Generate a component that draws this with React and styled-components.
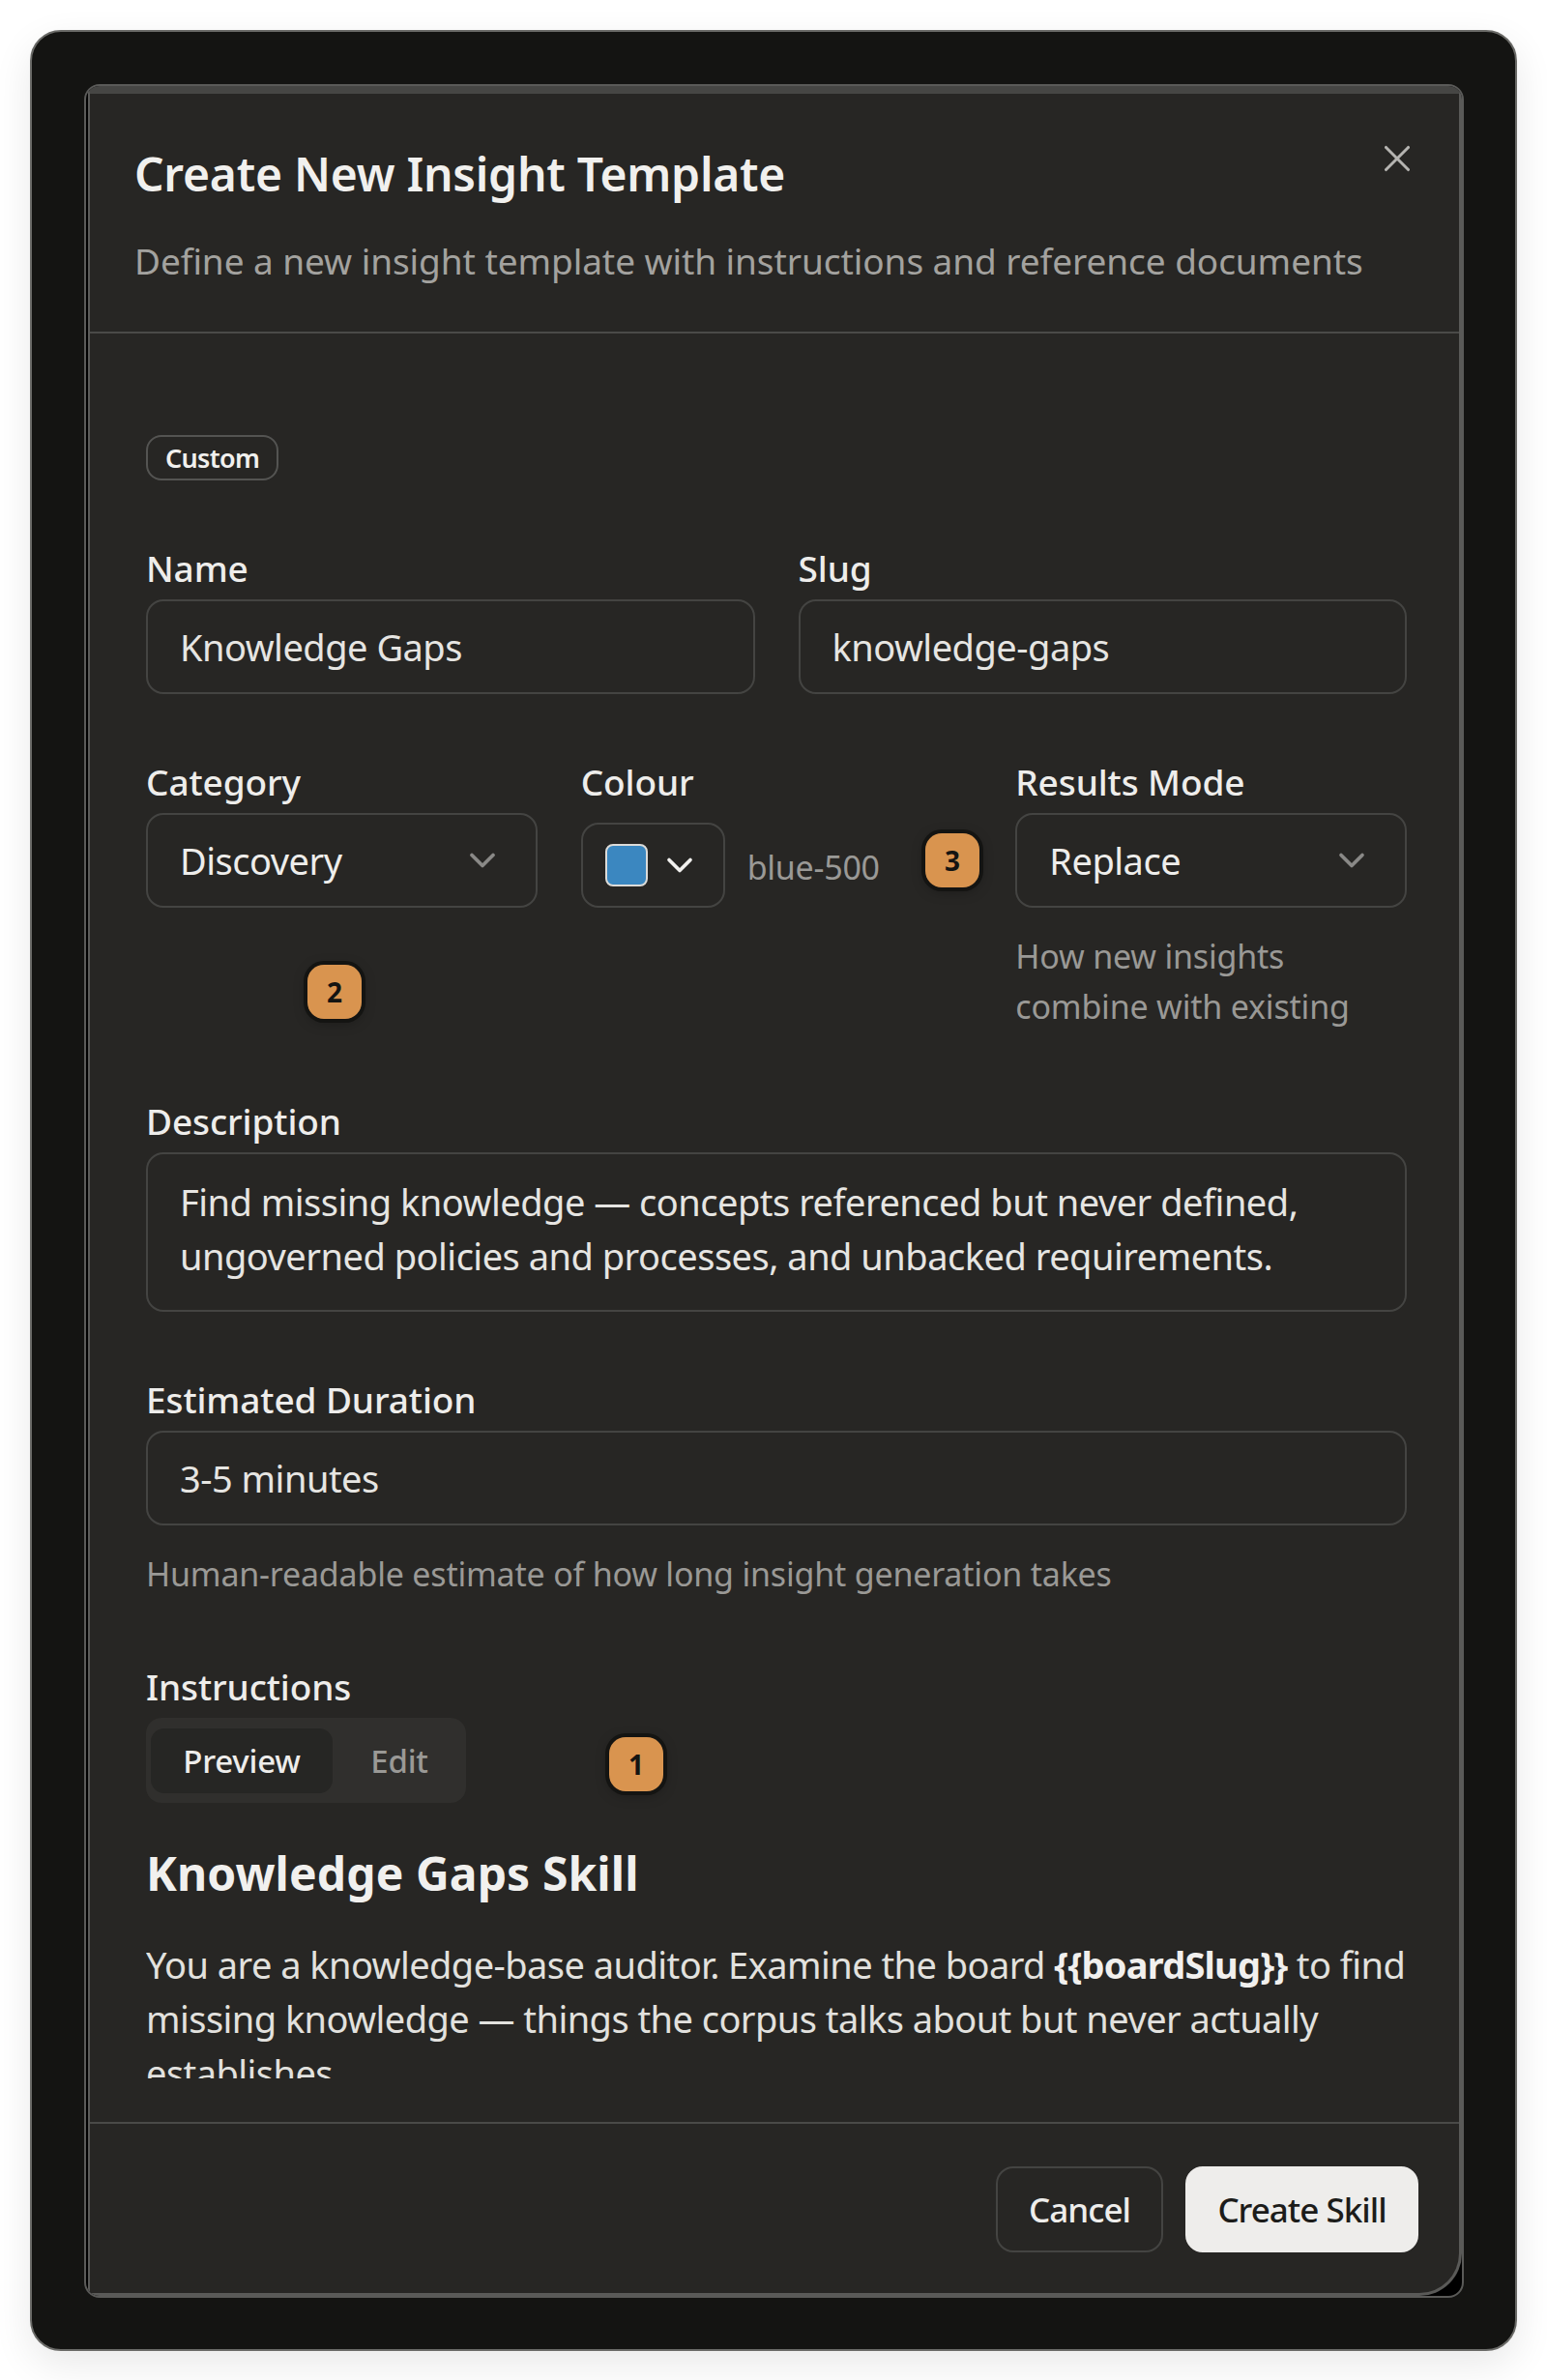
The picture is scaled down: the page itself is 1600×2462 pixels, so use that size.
import styled, { createGlobalStyle } from "styled-components";
import { X, ChevronDown } from "lucide-react";

const GlobalStyle = createGlobalStyle`
  html, body {
    margin: 0;
    background: #ffffff;
  }
  * {
    box-sizing: border-box;
  }
`;

const Page = styled.div`
  width: 1600px;
  height: 2462px;
  padding: 31px;
  font-family: "Noto Sans", "Roboto", sans-serif;
  color: #eeedeb;
`;

const Window = styled.div`
  height: 2401px;
  padding: 54px 53px 53px 54px;
  background: #141412;
  border: 2px solid #6a6a67;
  border-radius: 32px;
  box-shadow: 0 14px 40px rgba(0, 0, 0, 0.09);
`;

const Frame = styled.div`
  position: relative;
  height: 100%;
  padding-left: 2px;
  background: #000;
  border: 2px solid #5a5a58;
  border-radius: 16px;
  overflow: hidden;
`;

const Panel = styled.div`
  position: relative;
  display: flex;
  flex-direction: column;
  height: 100%;
  background: #272624;
  border-style: solid;
  border-color: #464644 #5a5a58 #5a5a58 #5a5a58;
  border-width: 8px 3px 3px 2px;
  border-bottom-right-radius: 44px;
`;

const Header = styled.header`
  height: 248px;
  padding: 52px 46px 0;
  border-bottom: 2px solid #4a4a48;
`;

const Title = styled.h2`
  margin: 0;
  font-size: 48px;
  line-height: 62px;
  font-weight: 600;
  letter-spacing: -0.25px;
  color: #f1f0ee;
`;

const Subtitle = styled.p`
  margin: 33px 0 0;
  font-size: 37px;
  line-height: 52px;
  letter-spacing: -0.07px;
  color: #a3a29f;
`;

const CloseButton = styled.button`
  position: absolute;
  top: 44px;
  right: 41px;
  padding: 0;
  display: flex;
  background: none;
  border: 0;
  color: #b5b4b1;
`;

const Body = styled.div`
  flex: 1;
  min-height: 0;
  padding: 105px 54px 0 58px;
  overflow: hidden;
`;

const Scroller = styled.div`
  height: 1700px;
  overflow: hidden;
`;

const Tag = styled.span`
  display: inline-flex;
  align-items: center;
  height: 47px;
  padding: 0 18px;
  font-size: 27px;
  font-weight: 600;
  letter-spacing: -0.7px;
  border: 2px solid #545452;
  border-radius: 16px;
  color: #f1f0ee;
`;

const FieldGrid = styled.div`
  display: grid;
  grid-template-columns: ${(p) => `repeat(${p.$cols}, 1fr)`};
  column-gap: 45px;
  margin-top: ${(p) => p.$top}px;
`;

const Field = styled.div`
  margin-top: ${(p) => p.$top || 0}px;
  min-width: 0;
`;

const Label = styled.label`
  display: block;
  height: 41px;
  margin-bottom: 12px;
  font-size: 37px;
  line-height: 41px;
  font-weight: 500;
  letter-spacing: -0.1px;
  color: #eeedeb;
`;

const Control = styled.div`
  display: flex;
  align-items: center;
  justify-content: space-between;
  height: 98px;
  padding: 0 33px;
  font-size: 38px;
  letter-spacing: -0.5px;
  border: 2px solid #444442;
  border-radius: 18px;
  color: #e6e5e2;
`;

const Select = styled(Control)`
  padding-right: 33px;
  color: #eeedeb;
  svg {
    color: #8a8987;
  }
`;

const TextArea = styled(Control)`
  display: block;
  height: 165px;
  padding-top: 21px;
  line-height: 56px;
`;

const ColourRow = styled.div`
  display: flex;
  align-items: flex-end;
  height: 98px;
`;

const ColourButton = styled.div`
  display: flex;
  align-items: center;
  gap: 11px;
  width: 149px;
  height: 88px;
  padding-left: 23px;
  border: 2px solid #444442;
  border-radius: 18px;
  color: #f1f0ee;
`;

const Swatch = styled.span`
  flex: none;
  width: 44px;
  height: 44px;
  background: #3b87c0;
  border: 2px solid #dcdbd8;
  border-radius: 8px;
`;

const ColourName = styled.span`
  margin: 0 0 19px 23px;
  font-size: 34px;
  letter-spacing: -0.25px;
  color: #9a9996;
`;

const Help = styled.p`
  margin: ${(p) => p.$top}px 0 0;
  font-size: 34px;
  line-height: 52px;
  letter-spacing: -0.2px;
  color: #9a9996;
`;

const Tabs = styled.div`
  display: inline-flex;
  align-items: center;
  width: 331px;
  height: 88px;
  padding-left: 5px;
  background: #302f2d;
  border-radius: 16px;
`;

const Tab = styled.span`
  display: flex;
  align-items: center;
  justify-content: center;
  width: ${(p) => (p.$active ? 188 : 138)}px;
  height: 67px;
  font-size: 33px;
  font-weight: 500;
  letter-spacing: -0.2px;
  border-radius: 14px;
  background: ${(p) => (p.$active ? "#262624" : "transparent")};
  color: ${(p) => (p.$active ? "#eeedeb" : "#9a9996")};
`;

const Heading = styled.h3`
  margin: 42px 0 0;
  font-size: 48px;
  line-height: 62px;
  font-weight: 700;
  letter-spacing: 0.1px;
  color: #f1f0ee;
`;

const Paragraph = styled.p`
  margin: 35px 0 0;
  font-size: 38px;
  line-height: 56px;
  letter-spacing: -0.55px;
  color: #e2e1de;
  strong {
    font-weight: 700;
    letter-spacing: -0.8px;
    color: #f1f0ee;
  }
`;

const Footer = styled.footer`
  display: flex;
  justify-content: flex-end;
  gap: 23px;
  height: 177px;
  padding: 44px 42px 0 0;
  border-top: 2px solid #4a4a48;
`;

const Button = styled.button`
  height: 89px;
  width: ${(p) => p.$w}px;
  padding: 0;
  font-family: inherit;
  font-size: 35px;
  font-weight: 500;
  letter-spacing: -1px;
  border-radius: 18px;
  border: 2px solid ${(p) => (p.$primary ? "#eeedeb" : "#444442")};
  background: ${(p) => (p.$primary ? "#eeedeb" : "transparent")};
  color: ${(p) => (p.$primary ? "#1c1c1a" : "#eeedeb")};
`;

const Marker = styled.span`
  position: absolute;
  left: ${(p) => p.$x}px;
  top: ${(p) => p.$y}px;
  display: flex;
  align-items: center;
  justify-content: center;
  width: 56px;
  height: 56px;
  font-size: 28px;
  font-weight: 700;
  background: #d9944f;
  border-radius: 17px;
  box-shadow: 0 0 0 4px #141412, 0 3px 14px rgba(0, 0, 0, 0.35);
  color: #141412;
`;

const App = () => {
  return (
    <Page>
      <GlobalStyle />
      <Window>
        <Frame>
          <Panel>
            <Header>
              <Title>Create New Insight Template</Title>
              <Subtitle>Define a new insight template with instructions and reference documents</Subtitle>
            </Header>
            <CloseButton>
              <X size={46} strokeWidth={1.6} />
            </CloseButton>

            <Body>
              <Scroller>
                <Tag>Custom</Tag>

                <FieldGrid $cols={2} $top={70}>
                  <Field>
                    <Label>Name</Label>
                    <Control>Knowledge Gaps</Control>
                  </Field>
                  <Field>
                    <Label>Slug</Label>
                    <Control>knowledge-gaps</Control>
                  </Field>
                </FieldGrid>

                <FieldGrid $cols={3} $top={70}>
                  <Field>
                    <Label>Category</Label>
                    <Select>
                      Discovery
                      <ChevronDown size={44} />
                    </Select>
                  </Field>
                  <Field>
                    <Label>Colour</Label>
                    <ColourRow>
                      <ColourButton>
                        <Swatch />
                        <ChevronDown size={44} />
                      </ColourButton>
                      <ColourName>blue-500</ColourName>
                    </ColourRow>
                  </Field>
                  <Field>
                    <Label>Results Mode</Label>
                    <Select>
                      Replace
                      <ChevronDown size={44} />
                    </Select>
                    <Help $top={24}>How new insights combine with existing</Help>
                  </Field>
                </FieldGrid>

                <Field $top={72}>
                  <Label>Description</Label>
                  <TextArea>
                    Find missing knowledge — concepts referenced but never defined, ungoverned policies and processes, and unbacked requirements.
                  </TextArea>
                </Field>

                <Field $top={70}>
                  <Label>Estimated Duration</Label>
                  <Control>3-5 minutes</Control>
                  <Help $top={24}>Human-readable estimate of how long insight generation takes</Help>
                </Field>

                <Field $top={70}>
                  <Label>Instructions</Label>
                  <Tabs>
                    <Tab $active>Preview</Tab>
                    <Tab>Edit</Tab>
                  </Tabs>
                </Field>

                <Heading>Knowledge Gaps Skill</Heading>
                <Paragraph>
                  You are a knowledge-base auditor. Examine the board <strong>{"{{boardSlug}}"}</strong> to find missing knowledge — things the corpus talks about but never actually establishes
                </Paragraph>
              </Scroller>
            </Body>

            <Footer>
              <Button $w={173}>Cancel</Button>
              <Button $primary $w={241}>Create Skill</Button>
            </Footer>

            <Marker $x={864} $y={765}>3</Marker>
            <Marker $x={225} $y={901}>2</Marker>
            <Marker $x={537} $y={1700}>1</Marker>
          </Panel>
        </Frame>
      </Window>
    </Page>
  );
};

export default App;
